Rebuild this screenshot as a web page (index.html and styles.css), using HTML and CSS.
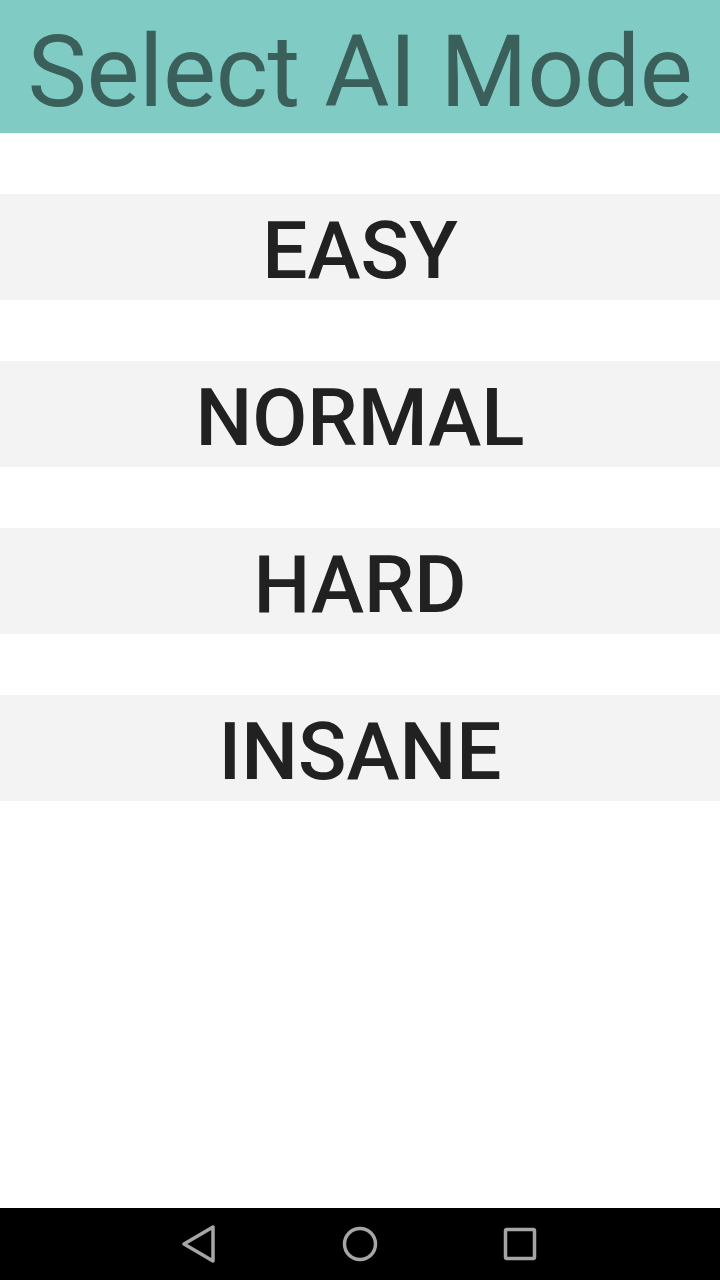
FILE: index.html
```html
<!DOCTYPE html>
<html>
<head>
<meta charset="utf-8">
<link rel="stylesheet" href="styles.css">
</head>
<body>
<div class="screen">
  <header class="header"><h1 class="title">Select AI Mode</h1></header>
  <main class="modes">
    <div class="mode">EASY</div>
    <div class="mode">NORMAL</div>
    <div class="mode">HARD</div>
    <div class="mode">INSANE</div>
  </main>
  <nav class="navbar">
    <svg class="nav-icon" width="40" height="40" viewBox="0 0 40 40"><path d="M33 3 L33 37 L4 20 Z" fill="none" stroke="#a6a6a6" stroke-width="3.5" stroke-linejoin="round"/></svg>
    <svg class="nav-icon" width="40" height="40" viewBox="0 0 40 40"><circle cx="20" cy="20" r="15.5" fill="none" stroke="#a6a6a6" stroke-width="3.5"/></svg>
    <svg class="nav-icon" width="40" height="40" viewBox="0 0 40 40"><rect x="5.5" y="5.5" width="29" height="29" rx="1.5" fill="none" stroke="#a6a6a6" stroke-width="3.5"/></svg>
  </nav>
</div>
</body>
</html>
```
FILE: styles.css
```css
html, body {
  margin: 0;
  padding: 0;
  background: #ffffff;
}
.screen {
  width: 720px;
  height: 1280px;
  display: flex;
  flex-direction: column;
  font-family: Roboto, "Noto Sans", sans-serif;
}
.header {
  height: 133px;
  background: #80cbc4;
  display: flex;
  align-items: center;
  justify-content: center;
}
.title {
  margin: 0;
  font-weight: 400;
  font-size: 100px;
  letter-spacing: -0.4px;
  line-height: 1;
  color: #3b605b;
  white-space: nowrap;
  padding-top: 10px;
}
.modes {
  display: flex;
  flex-direction: column;
  gap: 61px;
  padding-top: 61px;
}
.mode {
  height: 106px;
  background: #f3f3f3;
  display: flex;
  align-items: center;
  justify-content: center;
  font-size: 80px;
  font-weight: 500;
  color: #212121;
  line-height: 1;
  padding-top: 8px;
  box-sizing: border-box;
}
.navbar {
  margin-top: auto;
  height: 72px;
  background: #000000;
  display: flex;
  align-items: center;
  justify-content: center;
  gap: 120px;
}
.nav-icon {
  display: block;
}
```
